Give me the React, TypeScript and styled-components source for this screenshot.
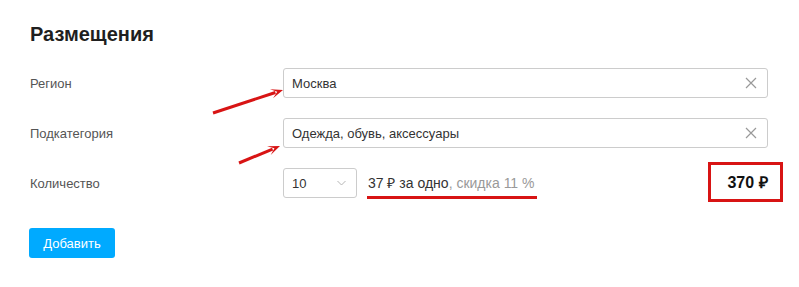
import React, { FC } from "react";
import styled, { createGlobalStyle } from "styled-components";

const GlobalStyle = createGlobalStyle`
  html, body {
    margin: 0;
    padding: 0;
    background: #fff;
    font-family: "Liberation Sans", Arial, sans-serif;
  }
`;

const Page = styled.div`
  position: relative;
  width: 799px;
  height: 287px;
  box-sizing: border-box;
  padding: 22px 31px 0 30px;
`;

const Title = styled.h2`
  margin: 0 0 22px;
  font-size: 20px;
  line-height: 24px;
  font-weight: bold;
  color: #1f1f1f;
`;

const Form = styled.div`
  display: flex;
  flex-direction: column;
  gap: 20px;
`;

const Row = styled.div`
  display: grid;
  grid-template-columns: 253px 1fr;
  align-items: center;
  height: 30px;
`;

const Label = styled.div`
  font-size: 13px;
  color: #555;
`;

const Field = styled.div`
  display: flex;
  align-items: center;
  height: 30px;
  box-sizing: border-box;
  border: 1px solid #ccc;
  border-radius: 3px;
  padding: 0 10px 0 8px;
  font-size: 13px;
  color: #333;
`;

const FieldText = styled.span`
  flex: 1;
`;

const Select = styled(Field)`
  width: 74px;
  padding: 0 10px 0 8px;
`;

const Controls = styled.div`
  display: flex;
  align-items: center;
  height: 30px;
`;

const Price = styled.span<{ $muted?: boolean }>`
  color: ${(p) => (p.$muted ? "#999" : "#333")};
`;

const PerUnit = styled.div`
  align-self: flex-start;
  margin: 7px 0 0 10px;
  padding: 0 2px 5px 1px;
  font-size: 14px;
  line-height: 16px;
  border-bottom: 3px solid #d81414;
`;

const Total = styled.div`
  margin: -6px -15px -4px auto;
  width: 75px;
  height: 40px;
  box-sizing: border-box;
  border: 3px solid #d81414;
  display: flex;
  align-items: center;
  justify-content: center;
  padding-left: 4px;
  font-size: 16px;
  font-weight: bold;
  color: #111;
`;

const AddButton = styled.button`
  margin-top: 30px;
  margin-left: -1px;
  width: 86px;
  height: 30px;
  border: none;
  border-radius: 3px;
  background: #00aaff;
  color: #fff;
  font-family: inherit;
  font-size: 13px;
  padding: 0;
`;

const Annotations = styled.svg`
  position: absolute;
  left: 0;
  top: 0;
  pointer-events: none;
`;

const ClearIcon: FC = () => (
  <svg width="12" height="12" viewBox="0 0 12 12">
    <path d="M1 1L11 11M11 1L1 11" stroke="#999" strokeWidth="1.2" />
  </svg>
);

const Chevron: FC = () => (
  <svg width="9" height="6" viewBox="0 0 9 6">
    <path d="M0.5 1L4.5 5L8.5 1" fill="none" stroke="#b5b5b5" strokeWidth="1" />
  </svg>
);

const Arrow: FC<{ x1: number; y1: number; x2: number; y2: number }> = ({
  x1,
  y1,
  x2,
  y2,
}) => {
  const a = Math.atan2(y2 - y1, x2 - x1);
  const len = 13;
  const spread = 0.38;
  const p1 = [x2 - len * Math.cos(a - spread), y2 - len * Math.sin(a - spread)];
  const p2 = [x2 - len * Math.cos(a + spread), y2 - len * Math.sin(a + spread)];
  const bx = x2 - 8 * Math.cos(a);
  const by = y2 - 8 * Math.sin(a);
  return (
    <g>
      <line x1={x1} y1={y1} x2={bx} y2={by} stroke="#d81414" strokeWidth="3" />
      <polygon
        points={`${x2},${y2} ${p1[0]},${p1[1]} ${bx + 2 * Math.cos(a)},${by + 2 * Math.sin(a)} ${p2[0]},${p2[1]}`}
        fill="#d81414"
      />
    </g>
  );
};

export default function App() {
  return (
    <>
      <GlobalStyle />
      <Page>
        <Title>Размещения</Title>
        <Form>
          <Row>
            <Label>Регион</Label>
            <Field>
              <FieldText>Москва</FieldText>
              <ClearIcon />
            </Field>
          </Row>
          <Row>
            <Label>Подкатегория</Label>
            <Field>
              <FieldText>Одежда, обувь, аксессуары</FieldText>
              <ClearIcon />
            </Field>
          </Row>
          <Row>
            <Label>Количество</Label>
            <Controls>
              <Select>
                <FieldText>10</FieldText>
                <Chevron />
              </Select>
              <PerUnit>
                <Price>37 ₽ за одно</Price>
                <Price $muted>, скидка 11 %</Price>
              </PerUnit>
              <Total>370 ₽</Total>
            </Controls>
          </Row>
        </Form>
        <AddButton>Добавить</AddButton>
        <Annotations width="799" height="287">
          <Arrow x1={213} y1={113} x2={283} y2={90} />
          <Arrow x1={239} y1={163} x2={280} y2={146} />
        </Annotations>
      </Page>
    </>
  );
}
